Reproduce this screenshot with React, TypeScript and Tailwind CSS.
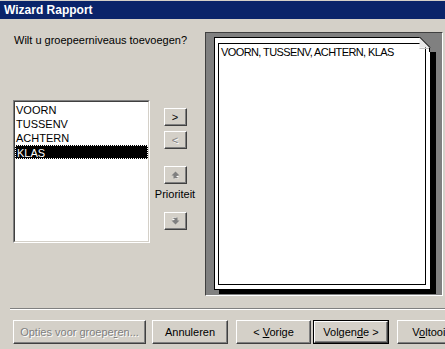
import type { ReactNode } from "react";

const fields = ["VOORN", "TUSSENV", "ACHTERN", "KLAS"];

// Win2000 style raised button
function Btn({
  children,
  w,
  h = 24,
  disabled = false,
  isDefault = false,
}: {
  children: ReactNode;
  w: number;
  h?: number;
  disabled?: boolean;
  isDefault?: boolean;
}) {
  const face = (
    <div
      className={`flex flex-1 items-center justify-center border border-t-white border-l-white border-r-[#404040] border-b-[#404040] bg-[#d4d0c8] shadow-[inset_-1px_-1px_0_#808080,inset_1px_1px_0_#d4d0c8] ${
        disabled ? "text-[#808080] [text-shadow:1px_1px_0_#fff]" : "text-black"
      }`}
    >
      {children}
    </div>
  );
  return (
    <div
      className={`flex shrink-0 ${isDefault ? "border border-black" : ""}`}
      style={{ width: w, height: h }}
    >
      {face}
    </div>
  );
}

function Arrow({ up }: { up: boolean }) {
  return (
    <svg width="9" height="8" viewBox="0 0 9 8" className={up ? "" : "rotate-180"}>
      <path d="M4.5 0.5 L8.5 4.5 L6.5 4.5 L6.5 7.5 L2.5 7.5 L2.5 4.5 L0.5 4.5 Z" fill="#808080" />
      <path d="M5.5 5.5 L7.5 5.5 M7.5 8 L3.5 8" stroke="#fff" strokeWidth="1" fill="none" />
    </svg>
  );
}

function Preview() {
  return (
    <div className="mt-[13px] flex h-[264px] w-[238px] flex-col border border-t-[#404040] border-l-[#404040] border-r-white border-b-white bg-[#808080] pl-[8px] pt-[4px]">
      <div className="relative h-[253px] w-[217px] border border-black bg-white shadow-[5px_4px_0_#000]">
        <div className="ml-[3px] mt-[5px] h-[242px] w-[208px] border border-black pl-[2px] pt-[2px] leading-[13px] tracking-[-0.6px]">
          VOORN, TUSSENV, ACHTERN, KLAS
        </div>
        {/* folded corner */}
        <svg
          width="17"
          height="15"
          viewBox="0 0 17 15"
          className="absolute right-[-6px] top-[-1px]"
        >
          <path d="M0 0 L17 0 L17 15 L11 15 L11 12 Z" fill="#808080" />
          <path d="M0.5 0.5 L10.5 10.5 L0.5 10.5 Z" fill="#e8e8e8" />
          <path d="M0.5 0 L11 10.5" stroke="#000" strokeWidth="1" />
          <path d="M0.5 11.5 L10 11.5" stroke="#c0c0c0" strokeWidth="1" />
          <path d="M10.5 11 L10.5 15" stroke="#000" strokeWidth="1" />
        </svg>
      </div>
    </div>
  );
}

export default function App() {
  return (
    <div className="h-[349px] w-[445px] overflow-hidden bg-[#d4d0c8] pt-[1px] font-['Liberation_Sans',Arial,sans-serif] text-[11px] text-black">
      <div className="flex h-[18px] items-center bg-[#0a246a] pl-[4px] text-[12px] font-bold text-white">
        Wizard Rapport
      </div>

      <div className="flex">
        <div className="flex w-[205px] shrink-0 flex-col pl-[14px]">
          <div className="mt-[15px] leading-[13px]">Wilt u groepeerniveaus toevoegen?</div>

          <div className="ml-[-1px] mt-[53px] flex">
            <div className="h-[143px] w-[137px] border border-t-[#808080] border-l-[#808080] border-r-white border-b-white">
              <div className="h-full w-full border border-t-[#404040] border-l-[#404040] border-r-[#d4d0c8] border-b-[#d4d0c8] bg-white pt-[1px]">
                {fields.map((f, i) => {
                  const sel = i === fields.length - 1;
                  return (
                    <div
                      key={f}
                      className={`h-[14px] pl-[1px] leading-[14px] ${
                        sel ? "border border-dotted border-white bg-black pl-0 leading-[12px] text-white" : ""
                      }`}
                    >
                      {f}
                    </div>
                  );
                })}
              </div>
            </div>

            <div className="ml-[3px] flex w-[44px] flex-col items-center">
              <div className="mt-[8px]">
                <Btn w={23} h={18}>&gt;</Btn>
              </div>
              <div className="mt-[5px]">
                <Btn w={23} h={18} disabled>&lt;</Btn>
              </div>
              <div className="mt-[17px]">
                <Btn w={23} h={18} disabled>
                  <Arrow up />
                </Btn>
              </div>
              <div className="mt-[4px] leading-[13px]">Prioriteit</div>
              <div className="mt-[11px]">
                <Btn w={23} h={18} disabled>
                  <Arrow up={false} />
                </Btn>
              </div>
            </div>
          </div>
        </div>

        <Preview />
      </div>

      <div className="ml-[10px] mt-[12px] h-[2px] border-t border-t-[#808080] border-b border-b-white" />

      <div className="ml-[13px] mt-[10px] flex">
        <Btn w={133} disabled>
          <span>
            Opties voor groepe<span className="underline">r</span>en...
          </span>
        </Btn>
        <div className="ml-[6px]">
          <Btn w={76}>Annuleren</Btn>
        </div>
        <div className="ml-[8px]">
          <Btn w={75}>
            <span>
              &lt; <span className="underline">V</span>orige
            </span>
          </Btn>
        </div>
        <div className="ml-[2px]">
          <Btn w={76} isDefault>
            <span>
              Volgen<span className="underline">d</span>e &gt;
            </span>
          </Btn>
        </div>
        <div className="ml-[8px]">
          <Btn w={76}>
            <span>
              V<span className="underline">o</span>ltooien
            </span>
          </Btn>
        </div>
      </div>
    </div>
  );
}
